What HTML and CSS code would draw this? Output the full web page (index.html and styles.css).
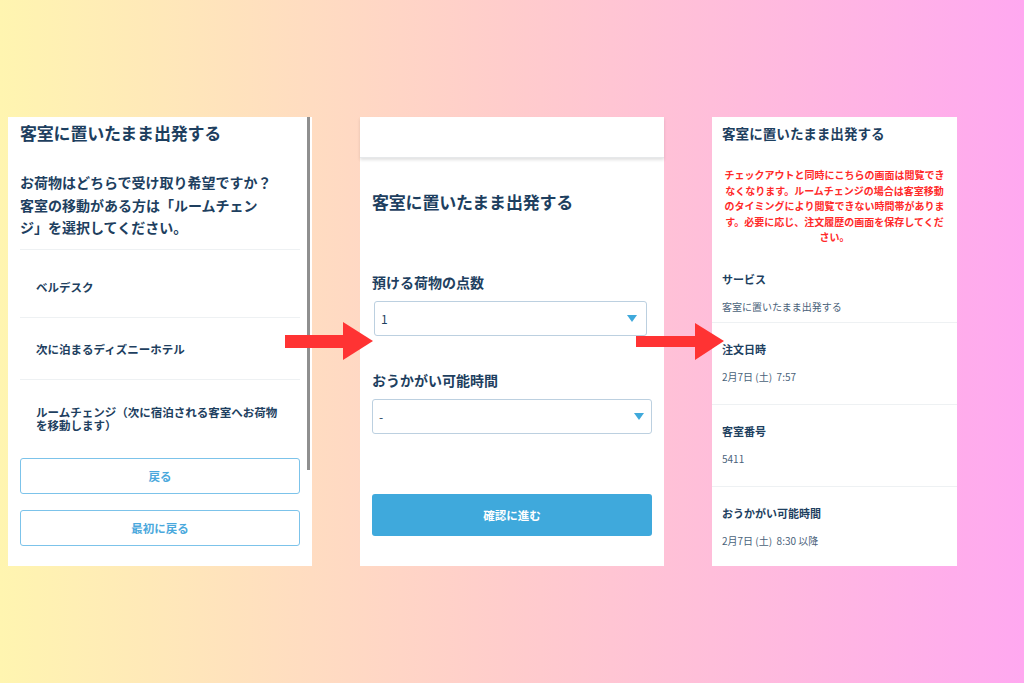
FILE: index.html
```html
<!DOCTYPE html>
<html lang="ja">
<head>
    <meta charset="UTF-8">
    <title>客室に置いたまま出発する</title>
    <link rel="stylesheet" href="styles.css">
</head>
<body>
    <div class="stage">
        <!-- 画面1：受け取り場所の選択 -->
        <div class="panel panel-select">
            <h2 class="title">客室に置いたまま出発する</h2>
            <p class="question">お荷物はどちらで受け取り希望ですか？<br>客室の移動がある方は「ルームチェン<br>ジ」を選択してください。</p>
            <ul class="options">
                <li>ベルデスク</li>
                <li>次に泊まるディズニーホテル</li>
                <li class="multi">ルームチェンジ（次に宿泊される客室へお荷物を移動します）</li>
            </ul>
            <div class="btn-group">
                <button type="button" class="btn-outline">戻る</button>
                <button type="button" class="btn-outline">最初に戻る</button>
            </div>
            <div class="scroll-thumb"></div>
        </div>

        <!-- 画面2：点数と時間 -->
        <div class="panel panel-form">
            <div class="panel-header"></div>
            <div class="form-body">
                <h2 class="title">客室に置いたまま出発する</h2>
                <label class="field-label">預ける荷物の点数</label>
                <div class="select select-count">
                    <span>1</span>
                    <span class="caret"></span>
                </div>
                <label class="field-label">おうかがい可能時間</label>
                <div class="select select-time">
                    <span>-</span>
                    <span class="caret"></span>
                </div>
                <button type="button" class="btn-primary">確認に進む</button>
            </div>
        </div>

        <!-- 画面3：注文履歴 -->
        <div class="panel panel-history">
            <h2 class="title-small">客室に置いたまま出発する</h2>
            <p class="notice">チェックアウトと同時にこちらの画面は閲覧できなくなります。ルームチェンジの場合は客室移動のタイミングにより閲覧できない時間帯があります。必要に応じ、注文履歴の画面を保存してください。</p>
            <dl class="detail">
                <dt>サービス</dt>
                <dd>客室に置いたまま出発する</dd>
            </dl>
            <dl class="detail">
                <dt>注文日時</dt>
                <dd>2月7日 (土)&nbsp; 7:57</dd>
            </dl>
            <dl class="detail">
                <dt>客室番号</dt>
                <dd>5411</dd>
            </dl>
            <dl class="detail last">
                <dt>おうかがい可能時間</dt>
                <dd>2月7日 (土)&nbsp; 8:30 以降</dd>
            </dl>
        </div>

        <svg class="arrow arrow-1" width="88" height="38" viewBox="0 0 88 38">
            <rect x="0" y="13" width="59" height="13" fill="#ff3333"/>
            <polygon points="58,0 88,19 58,38" fill="#ff3333"/>
        </svg>
        <svg class="arrow arrow-2" width="88" height="38" viewBox="0 0 88 38">
            <rect x="0" y="14" width="60" height="11" fill="#ff3333"/>
            <polygon points="59,1 88,19 59,38" fill="#ff3333"/>
        </svg>
    </div>
</body>
</html>
```

FILE: styles.css
```css
html, body {
    margin: 0;
    padding: 0;
}

body {
    font-family: "Noto Sans CJK JP", "Noto Sans", sans-serif;
    color: #1e3f5f;
    background: linear-gradient(to right, #fff5b0 0%, #ffcccc 50%, #ffa8f0 100%);
    width: 1024px;
    height: 683px;
    overflow: hidden;
}

.stage {
    position: relative;
    display: flex;
    align-items: flex-start;
    gap: 48px;
    padding: 117px 0 0 8px;
    height: 683px;
    box-sizing: border-box;
}

.panel {
    position: relative;
    background: #fff;
    height: 449px;
    box-sizing: border-box;
}

/* 画面1 */
.panel-select {
    width: 304px;
    padding: 0 12px;
}

.title {
    margin: 5px 0 0;
    font-size: 17px;
    line-height: 22px;
    font-weight: 700;
    letter-spacing: -0.2px;
}

.question {
    margin: 27px 0 0;
    font-size: 14px;
    line-height: 22.5px;
    font-weight: 700;
}

.options {
    list-style: none;
    margin: 10px 0 0;
    padding: 0;
}

.options li {
    border-top: 1px solid #eef1f3;
    padding: 23px 16px 22px;
    font-size: 11.5px;
    line-height: 16px;
    font-weight: 700;
}

.options li:first-child {
    padding-top: 29px;
}

.options li.multi {
    padding-top: 26px;
    line-height: 13px;
    padding-right: 20px;
}

.btn-group {
    display: flex;
    flex-direction: column;
    gap: 16px;
    margin-top: 4px;
}

.btn-outline {
    height: 36px;
    background: #fff;
    border: 1px solid #7cc3ea;
    border-radius: 3px;
    color: #4aa8dc;
    font-family: inherit;
    font-size: 11.5px;
    font-weight: 700;
}

.scroll-thumb {
    position: absolute;
    top: 0;
    right: 2px;
    width: 3px;
    height: 353px;
    background: #8f8f8f;
}

/* 画面2 */
.panel-form {
    width: 304px;
}

.panel-header {
    height: 41px;
    box-shadow: 0 2px 3px rgba(0, 0, 0, 0.12);
    border-bottom: 1px solid #e6e8ea;
    box-sizing: border-box;
}

.form-body {
    padding: 0 12px;
    display: flex;
    flex-direction: column;
}

.form-body .title {
    margin-top: 33px;
}

.field-label {
    margin-top: 59px;
    font-size: 14px;
    line-height: 20px;
    font-weight: 700;
}

.select + .field-label {
    margin-top: 34px;
}

.select {
    display: flex;
    justify-content: space-between;
    align-items: center;
    margin-top: 9px;
    height: 35px;
    box-sizing: border-box;
    border: 1px solid #bcd0e0;
    border-radius: 3px;
    padding: 0 9px 0 6px;
    font-size: 12px;
    color: #1e3f5f;
}

.select-count {
    margin-left: 2px;
    margin-right: 5px;
}

.select-time {
    padding-right: 7px;
}

.caret {
    width: 0;
    height: 0;
    border-left: 5px solid transparent;
    border-right: 5px solid transparent;
    border-top: 7px solid #3fa9db;
}

.btn-primary {
    margin-top: 60px;
    height: 42px;
    background: #3fa9dc;
    border: none;
    border-radius: 3px;
    color: #fff;
    font-family: inherit;
    font-size: 11.5px;
    font-weight: 700;
}

/* 画面3 */
.panel-history {
    width: 245px;
}

.title-small {
    margin: 6px 10px 0;
    font-size: 13.6px;
    line-height: 20px;
    font-weight: 700;
}

.notice {
    margin: 24px 10px 0;
    text-align: center;
    color: #ff2a2a;
    font-size: 10px;
    line-height: 15.6px;
    font-weight: 700;
}

.detail {
    margin: 0;
    padding: 19px 10px 20px;
    border-bottom: 1px solid #eef1f3;
}

.notice + .detail {
    padding-top: 27px;
    padding-bottom: 8px;
}

.detail.last {
    border-bottom: none;
}

.detail dt {
    font-size: 11px;
    line-height: 15px;
    font-weight: 700;
}

.detail dd {
    margin: 13px 0 0;
    font-size: 10px;
    line-height: 14px;
    color: #4a627a;
}

/* 矢印 */
.arrow {
    position: absolute;
    top: 322px;
}

.arrow-1 {
    left: 285px;
}

.arrow-2 {
    left: 636px;
}
```
